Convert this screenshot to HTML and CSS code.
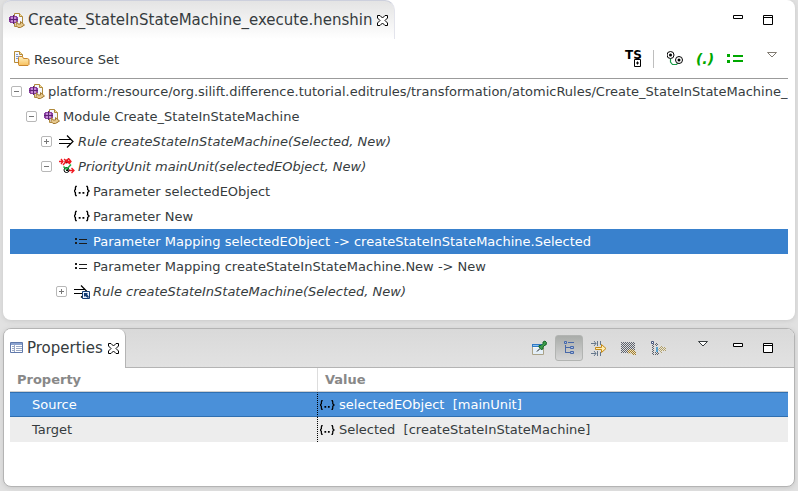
FILE: index.html
```html
<!DOCTYPE html>
<html lang="en">
<head>
<meta charset="utf-8">
<title>Henshin editor</title>
<meta name="viewport" content="width=device-width, initial-scale=1">
<link rel="stylesheet" href="styles.css">
</head>
<body>
<svg class="sprite" aria-hidden="true">
  <defs>
    <pattern id="dither" width="2" height="2" patternUnits="userSpaceOnUse">
      <path fill="#5c616c" d="M0 0h1v1H0zM1 1h1v1H1z"/>
    </pattern>
    <pattern id="ditherTan" width="2" height="2" patternUnits="userSpaceOnUse">
      <path fill="#f0e2b8" d="M0 0h2v2H0z"/><path fill="#9a7a3a" d="M0 0h1v1H0zM1 1h1v1H1z"/>
    </pattern>
    <pattern id="ditherPale" width="2" height="2" patternUnits="userSpaceOnUse">
      <path fill="#f0e8cc" d="M0 0h2v2H0z"/><path fill="#a89c78" d="M0 0h1v1H0zM1 1h1v1H1z"/>
    </pattern>
    <linearGradient id="folder" x1="0" y1="0" x2="0" y2="1">
      <stop offset="0" stop-color="#fff3c4"/><stop offset="1" stop-color="#f7bf5c"/>
    </linearGradient>
  </defs>
  <symbol id="i-henshin" viewBox="0 0 16 16">
    <path d="M5.500 1.500h5l3 3v10h-8z" fill="#f4f6fc" stroke="#b08a3c"/>
    <path d="M10.500 1.500v3h3" fill="#f3dca0" stroke="#b08a3c"/>
    <path d="M1 4h7v1h1v5H8v1H1v-1H0V5h1z" fill="#8a3fa0"/>
    <path d="M2 5h2v2H2zM5 5h2v2H5zM2 8h2v2H2zM5 8h2v2H5z" fill="#c58ad6"/>
    <path d="M4 3h1v9H4zM0 7h9v1H0z" fill="#5c2474"/>
    <path d="M7.500 9.500l1.500 2.500h2.500V9.500l4 3.500-4 2.500H9l-2-2z" fill="#e6c88c" stroke="#a47b35"/>
  </symbol>
  <symbol id="i-resource" viewBox="0 0 16 16">
    <path d="M.5 11.500V.5h5l3 3v8z" fill="#f3f6ff" stroke="#b68b35"/>
    <path d="M5.500.5v3h3" fill="#f3dca0" stroke="#b68b35"/>
    <path d="M2 3h2v1H2zM2 5h4v1H2zM2 7h2v1H2z" fill="#7f9acb"/>
    <path d="M4.500 13.500v-7l1-1h3l1 2h4l1.500 1v5l-1 1h-9z" fill="url(#folder)" stroke="#c9852c"/>
  </symbol>
  <symbol id="i-close" viewBox="0 -1 12 12">
    <path d="M.5.5h2.500l2.500 2.500L8 .5h2.500V3L8 5.500l2.500 2.500v2.500H8L5.500 8 3 10.500H.5V8L3 5.500.5 3z" fill="#fff" stroke="#000"/>
  </symbol>
  <symbol id="i-min" viewBox="0 0 16 16"><path d="M3.500 3.500h9v3h-9z" fill="#fff" stroke="#000"/></symbol>
  <symbol id="i-max" viewBox="0 0 16 16"><path d="M3.500 3.500h9v9h-9zM3 5.500h10" fill="#fff" stroke="#000"/></symbol>
  <symbol id="i-menu" viewBox="0 0 16 16"><path d="M3.500 1.500h9L8 6z" fill="#fff" stroke="currentColor"/></symbol>
  <symbol id="i-units" viewBox="0 0 16 16">
    <path d="M3.500 8v3l2 2.500h4l2-2" fill="none" stroke="#159a45" stroke-width="1.200"/>
    <circle cx="3.500" cy="4" r="3.500" fill="#fff" stroke="#000"/><circle cx="12" cy="9" r="3.500" fill="#fff" stroke="#000"/>
    <circle cx="3.500" cy="4" r="1.500"/><circle cx="12" cy="9" r="1.500"/>
  </symbol>
  <symbol id="i-assign" viewBox="0 0 16 16">
    <path d="M0 3h3v3H0zM0 9h3v3H0zM6 4h10v2H6zM6 9h10v2H6z" fill="#00a800"/>
  </symbol>
  <symbol id="i-rule" viewBox="0 0 16 16">
    <path d="M0 6.500h12M0 10.500h12M8 2.500l6 6-6 6" fill="none" stroke="#000" stroke-width="1.200"/>
  </symbol>
  <symbol id="i-rule-ref" viewBox="0 0 16 16">
    <path d="M0 6.500h11M0 10.500h11M7 2.500l6 6-6 6" fill="none" stroke="#000" stroke-width="1.200"/>
    <path d="M8.500 8.500h7v7h-7z" fill="#e8f1ff" stroke="#123c74"/>
    <path d="M10 10h4l-1 1 2 3-1 1-3-2-1 1z" fill="#123c74"/>
  </symbol>
  <symbol id="i-priority" viewBox="0 0 16 16">
    <circle cx="7.500" cy="3.500" r="2" fill="#7c1010"/>
    <path d="M0 3.500h4M2 1l2 2.500L2 6M8 3.500h4M10 1l2 2.500L10 6M5 1l6 5M10 0L4 7M10 12.500h5M12.500 10l2.500 2.500-2.500 2.500" fill="none" stroke="#f01820" stroke-width="1.300"/>
    <circle cx="7.500" cy="12" r="2.500" fill="#fff" stroke="#000"/>
    <path d="M7 11h2v2H7z" fill="#000"/>
    <path d="M4.500 8.500l3 3L12 6.500" fill="none" stroke="#18b040" stroke-width="1.500"/>
  </symbol>
  <symbol id="i-param" viewBox="0 0 17 16">
    <path d="M3 3H2L1.500 4.500v2L0 8l1.500 1.500v2L2 13h1M13 3h1l.5 1.500v2L16 8l-1.500 1.500v2L14 13h-1" fill="none" stroke="#000" stroke-width="1.400"/>
    <path d="M5 9h2v2H5zM9 9h2v2H9z" fill="#000"/>
  </symbol>
  <symbol id="i-mapping" viewBox="0 0 16 16">
    <path d="M1 5h2v2H1zM1 9h2v2H1zM5 6h8v1H5zM5 10h8v1H5z" fill="#1c1c1c"/>
  </symbol>
  <symbol id="i-properties" viewBox="0 0 14 12">
    <path d="M.5.5h12v10H.5z" fill="#fff" stroke="#6079ab"/><path d="M1 1h11v2H1z" fill="#8ba3d0"/>
    <path d="M2 4.500h2M2 6.500h2M2 8.500h2M6 4.500h6M6 6.500h6M6 8.500h6M4.500 2v8" stroke="#9ba9c5"/>
  </symbol>
  <symbol id="i-pin" viewBox="0 0 16 16">
    <path d="M1.500 4.500h11v10h-11z" fill="#fdfaef" stroke="#aaa288"/><path d="M1 4h12v3H1z" fill="#2f78c4"/><path d="M2 5h6v1H2z" fill="#8ec3f0"/>
    <path d="M2 8h10v6H2z" fill="#e4eff8"/>
    <path d="M6 11.500l3-3" stroke="#111"/>
    <path d="M8 5.500h2l2-2V2l2-1 1.500 1.500L15 5h-1l-2 2v2l-2 .5L8 7z" fill="#3d9c4a" stroke="#17642a"/>
  </symbol>
  <symbol id="i-tree" viewBox="0 0 16 16">
    <path d="M4.500 5v8M4 7.500h5M4 12.500h5M7 2.500h6" fill="none" stroke="#4768a8"/>
    <path d="M3.500 1.500h2v2h-2zM9.500 6.500h3v2h-3zM9.500 11.500h3v2h-3z" fill="#a9bce0" stroke="#4768a8"/>
  </symbol>
  <symbol id="i-advanced" viewBox="0 0 16 16">
    <path d="M0 3.500h5M3 1l2 2.500L3 6M6.500 1v5M9.500 1v4M0 13.500h5M3 11l2 2.500L3 16M6.500 11v5M9.500 12v4" fill="none" stroke="#66788c"/>
    <path d="M4.500 7.500h6v-3l4.500 4-4.500 4v-3h-6z" fill="#ffedb0" stroke="#c48a18"/>
  </symbol>
  <symbol id="i-defaults" viewBox="0 0 16 16">
    <path d="M0 2h14v11H0z" fill="url(#dither)"/>
    <path d="M6 11l3-2 2 1 1-1 3 3v3h-3l-2-2-2 1z" fill="url(#ditherTan)"/>
  </symbol>
  <symbol id="i-restore" viewBox="0 0 16 16">
    <path d="M.5 1.500h2v2h-2z" fill="#fff" stroke="#44557c"/>
    <path d="M1 4h2v11H1zM4 3h3v3H4zM4 12h4v3H4z" fill="url(#dither)"/><path d="M5 7h2v5H5z" fill="#58a2cf"/>
    <path d="M7 9l4-4v2h4v4h-4v3z" fill="url(#ditherPale)"/>
  </symbol>
</svg>

<main class="workbench">
  <section class="panel editor">
    <header class="bar">
      <div class="tab">
        <svg class="icon"><use href="#i-henshin"/></svg>
        <span class="tab-title">Create_StateInStateMachine_execute.henshin</span>
        <button class="close" aria-label="Close editor"><svg><use href="#i-close"/></svg></button>
      </div>
      <div class="tools">
        <button class="tool" aria-label="Minimize"><svg class="icon"><use href="#i-min"/></svg></button>
        <button class="tool" aria-label="Maximize"><svg class="icon"><use href="#i-max"/></svg></button>
      </div>
    </header>
    <div class="content">
      <div class="resource-bar">
        <svg class="icon"><use href="#i-resource"/></svg>
        <h1 class="resource-title">Resource Set</h1>
        <button class="tool" aria-label="Type system"><svg class="icon" viewBox="0 0 16 16">
          <text x="-1" y="8" class="ts-text">TS</text>
          <path d="M8.500 8.500h6v7h-6zM10 12h3M11.500 10.500v3" fill="#fff" stroke="#000"/></svg></button>
        <span class="separator"></span>
        <button class="tool" aria-label="Show units"><svg class="icon"><use href="#i-units"/></svg></button>
        <button class="tool tool-param" aria-label="Show parameters">(.)</button>
        <button class="tool" aria-label="Show mappings"><svg class="icon"><use href="#i-assign"/></svg></button>
        <button class="tool menu muted" aria-label="View menu"><svg class="icon"><use href="#i-menu"/></svg></button>
      </div>
      <ul class="tree">
        <li>
          <div class="row"><button class="expander open" aria-label="Collapse"></button><svg class="icon"><use href="#i-henshin"/></svg><span>platform:/resource/org.silift.difference.tutorial.editrules/transformation/atomicRules/Create_StateInStateMachine_ex</span></div>
          <ul>
            <li>
              <div class="row"><button class="expander open" aria-label="Collapse"></button><svg class="icon"><use href="#i-henshin"/></svg><span>Module Create_StateInStateMachine</span></div>
              <ul>
                <li><div class="row"><button class="expander" aria-label="Expand"></button><svg class="icon"><use href="#i-rule"/></svg><em>Rule createStateInStateMachine(Selected, New)</em></div></li>
                <li>
                  <div class="row"><button class="expander open" aria-label="Collapse"></button><svg class="icon"><use href="#i-priority"/></svg><em>PriorityUnit mainUnit(selectedEObject, New)</em></div>
                  <ul>
                    <li><div class="row leaf"><svg class="icon"><use href="#i-param"/></svg><span>Parameter selectedEObject</span></div></li>
                    <li><div class="row leaf"><svg class="icon"><use href="#i-param"/></svg><span>Parameter New</span></div></li>
                    <li class="selected"><div class="row leaf"><svg class="icon"><use href="#i-mapping"/></svg><span>Parameter Mapping selectedEObject -&gt; createStateInStateMachine.Selected</span></div></li>
                    <li><div class="row leaf"><svg class="icon"><use href="#i-mapping"/></svg><span>Parameter Mapping createStateInStateMachine.New -&gt; New</span></div></li>
                    <li><div class="row"><button class="expander" aria-label="Expand"></button><svg class="icon"><use href="#i-rule-ref"/></svg><em>Rule createStateInStateMachine(Selected, New)</em></div></li>
                  </ul>
                </li>
              </ul>
            </li>
          </ul>
        </li>
      </ul>
    </div>
  </section>

  <section class="panel properties">
    <header class="bar">
      <div class="tab">
        <svg class="icon-table"><use href="#i-properties"/></svg>
        <span class="tab-title">Properties</span>
        <button class="close" aria-label="Close properties"><svg><use href="#i-close"/></svg></button>
      </div>
      <div class="tools">
        <button class="tool" aria-label="Pin to selection"><svg class="icon"><use href="#i-pin"/></svg></button>
        <button class="tool pressed" aria-label="Show categories" aria-pressed="true"><svg class="icon"><use href="#i-tree"/></svg></button>
        <button class="tool" aria-label="Show advanced properties"><svg class="icon"><use href="#i-advanced"/></svg></button>
        <button class="tool" aria-label="Restore default value"><svg class="icon"><use href="#i-defaults"/></svg></button>
        <button class="tool" aria-label="Locate in tree"><svg class="icon"><use href="#i-restore"/></svg></button>
        <button class="tool menu" aria-label="View menu"><svg class="icon"><use href="#i-menu"/></svg></button>
        <button class="tool" aria-label="Minimize"><svg class="icon"><use href="#i-min"/></svg></button>
        <button class="tool" aria-label="Maximize"><svg class="icon"><use href="#i-max"/></svg></button>
      </div>
    </header>
    <div class="content">
      <table class="grid">
        <thead><tr><th scope="col" class="name">Property</th><th scope="col">Value</th></tr></thead>
        <tbody>
          <tr class="current"><td>Source</td><td><div class="value"><svg class="icon-small"><use href="#i-param"/></svg><span>selectedEObject  [mainUnit]</span></div></td></tr>
          <tr><td>Target</td><td><div class="value"><svg class="icon-small"><use href="#i-param"/></svg><span>Selected  [createStateInStateMachine]</span></div></td></tr>
        </tbody>
      </table>
    </div>
  </section>
</main>
</body>
</html>
```
FILE: styles.css
```css
* { box-sizing: border-box; }

body {
  margin: 0;
  background: #e1e1e1;
  color: #363c3e;
  font: 13px/25px "DejaVu Sans", sans-serif;
}

.sprite { position: absolute; width: 0; height: 0; }

.workbench {
  display: flex;
  flex-direction: column;
  gap: 8px;
  min-height: 100vh;
  padding: 0 3px 4px;
}

.panel {
  background: #fff;
  border-radius: 8px;
  box-shadow: 0 1px 5px #c8c8c8;
}

.editor { padding-bottom: 16px; }
.properties { flex: 1; border: 1px solid #b4b4b4; }

.bar { display: flex; justify-content: space-between; height: 39px; }

.tab {
  display: flex;
  align-items: center;
  height: 39px;
  padding: 0 5px 0 6px;
  font-size: 15px;
  white-space: nowrap;
}

.editor .tab {
  border-top: 1px solid #cdd0dd;
  border-right: 1px solid #e3e4ec;
  border-radius: 8px 10px 0 0;
  background: linear-gradient(#e4e4e4, #fff);
}

.properties .bar {
  border-bottom: 1px solid #b4b4b4;
  border-radius: 7px 7px 0 0;
  background: linear-gradient(#d9d9d9, #e2e2e2);
}

.properties .tab {
  padding-bottom: 1px;
  border-right: 1px solid #b4b4b4;
  border-radius: 7px 7px 0 0;
  background: #fff;
}

.tab-title { margin: 0 5px 0 3px; }

.icon { flex: none; width: 16px; height: 16px; overflow: visible; }
.icon-table { width: 14px; height: 12px; }
.icon-small { flex: none; width: 15px; height: 14px; }

button {
  padding: 0;
  border: 0;
  background: none;
  color: inherit;
  font: inherit;
}

.close, .close svg { display: block; width: 12px; height: 12px; }

.tools { display: flex; align-items: center; padding-right: 12px; }
.editor .tools { padding-top: 1px; }
.properties .tools { padding-right: 11px; }

.tool {
  display: flex;
  flex: none;
  align-items: center;
  justify-content: center;
  width: 30px;
  height: 26px;
}

.tools .menu { margin: 0 5px 0 14px; }
.muted { color: #817b72; }

.pressed {
  width: 28px;
  margin: 0 1px;
  border: 1px solid #b2b4b2;
  border-radius: 3px;
  background: linear-gradient(#a9aca9, #d6d6d6);
}

.content { padding: 0 7px; }
.properties .content { padding: 0 6px; }

.resource-bar {
  display: flex;
  align-items: center;
  height: 40px;
  padding: 1px 0 0 4px;
  border-bottom: 1px solid #9b9b9b;
}

.resource-title {
  flex: 1;
  margin: 0 0 0 4px;
  font-size: 13px;
  font-weight: normal;
}

.separator { width: 1px; height: 18px; margin: 0 6px 0 4px; background: #bebebe; }
.resource-bar .menu { margin: 0 1px 0 7px; }

.ts-text { fill: #000; font: bold 12px "DejaVu Sans", sans-serif; }
.tool-param { color: #00a800; font-size: 14px; font-style: italic; font-weight: bold; }

.tree, .tree ul { margin: 0; padding: 0; list-style: none; }
.tree { overflow: hidden; }
.tree ul .row { padding-left: 16px; }
.tree ul ul .row { padding-left: 31px; }
.tree ul ul ul .row { padding-left: 46px; }
.tree ul ul ul .leaf { padding-left: 64px; }

.row {
  display: flex;
  align-items: center;
  height: 25px;
  padding-left: 1px;
  white-space: nowrap;
}

.row .icon { margin: 0 3px 1px 0; }
.selected { background: #3981cd; color: #fff; }

.expander {
  flex: none;
  width: 11px;
  height: 11px;
  margin-right: 7px;
  border: 1px solid #b8b8b8;
  border-radius: 2px;
  background:
    linear-gradient(#777, #777) center / 5px 1px no-repeat,
    linear-gradient(#777, #777) center / 1px 5px no-repeat,
    #fff;
}

.open { background: linear-gradient(#777, #777) center / 5px 1px no-repeat, #fff; }

.grid { width: 100%; border-collapse: separate; border-spacing: 0; table-layout: fixed; }
.grid th, .grid td { height: 25px; padding: 0 0 0 7px; text-align: left; }
.grid th { height: 24px; border-bottom: 1px solid #d0d0d0; color: #888; line-height: 23px; }
.grid .name { width: 308px; border-right: 1px solid #ddd; }
.grid td { background: #ededed; line-height: 23px; }
.grid td:first-child { padding-left: 22px; border-right: 1px dotted #000; }
.grid td:last-child { padding-left: 2px; }
.current td { border-top: 1px solid #2f6fb0; border-bottom: 1px solid #2f6fb0; background: #4a90d9; color: #fff; }
.value { display: flex; align-items: center; gap: 4px; white-space: pre; }
```
